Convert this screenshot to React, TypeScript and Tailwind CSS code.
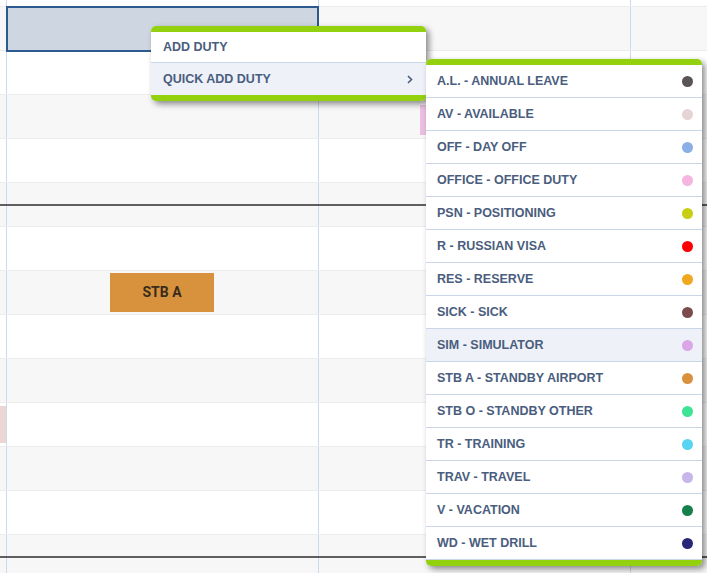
import React from "react";

const COLS = [6, 311, 311, 76];

function Cells({ h, bg }: { h: number; bg: string }) {
  return (
    <div className={`flex ${bg}`} style={{ height: h }}>
      {COLS.map((w, i) => (
        <div
          key={i}
          className={`shrink-0 ${i > 0 ? "border-l border-[#cbd9ea]" : ""}`}
          style={{ width: i > 0 ? w + 1 : w }}
        />
      ))}
    </div>
  );
}

function Row({ gray }: { gray: boolean }) {
  return (
    <div className="border-b border-[#ececec]">
      <Cells h={43} bg={gray ? "bg-[#f7f7f7]" : "bg-white"} />
    </div>
  );
}

function Separator() {
  return (
    <div className="flex flex-col border-b border-[#ececec]">
      <Cells h={21} bg="bg-[#f7f7f7]" />
      <div className="h-[2px] bg-[#5f5f5f]" />
      <Cells h={20} bg="bg-[#f7f7f7]" />
    </div>
  );
}

const DUTIES: [string, string][] = [
  ["A.L. - ANNUAL LEAVE", "#5a5456"],
  ["AV - AVAILABLE", "#e6d3d6"],
  ["OFF - DAY OFF", "#8ab0e6"],
  ["OFFICE - OFFICE DUTY", "#f4b6e0"],
  ["PSN - POSITIONING", "#c6cf14"],
  ["R - RUSSIAN VISA", "#ff0000"],
  ["RES - RESERVE", "#f0a820"],
  ["SICK - SICK", "#7b4c4b"],
  ["SIM - SIMULATOR", "#dba6e6"],
  ["STB A - STANDBY AIRPORT", "#d9913f"],
  ["STB O - STANDBY OTHER", "#3ee495"],
  ["TR - TRAINING", "#56d4f2"],
  ["TRAV - TRAVEL", "#c6b6ea"],
  ["V - VACATION", "#16804a"],
  ["WD - WET DRILL", "#2a2677"],
];

const font = { fontFamily: '"Liberation Sans", Arial, sans-serif' };

export default function App() {
  return (
    <div className="relative w-[707px] h-[573px] overflow-hidden bg-white">
      {/* background grid */}
      <div className="flex flex-col">
        <div className="border-b border-[#ececec]">
          <Cells h={6} bg="bg-white" />
        </div>
        <Row gray />
        <Row gray={false} />
        <Row gray />
        <Row gray={false} />
        <Separator />
        <Row gray={false} />
        <Row gray />
        <Row gray={false} />
        <Row gray />
        <Row gray={false} />
        <Row gray />
        <Row gray={false} />
        <Separator />
      </div>

      {/* selection */}
      <div className="absolute left-[6px] top-[6px] w-[313px] h-[46px] bg-[#cdd6e1] border-2 border-[#2d5a8e]" />

      {/* duty blocks */}
      <div
        className="absolute left-[110px] top-[273px] w-[104px] h-[39px] bg-[#d8923e] flex items-center justify-center text-[14px] font-bold text-[#3a2b1c]"
        style={{ fontFamily: "Roboto, sans-serif" }}
      >
        STB A
      </div>
      <div className="absolute left-[420px] top-[105px] w-[10px] h-[30px] bg-[#ecbfe2]" />
      <div className="absolute left-0 top-[406px] w-[6px] h-[37px] bg-[#ebd5d5]" />

      {/* context menu */}
      <div
        className="absolute left-[151px] top-[26px] w-[275px] rounded-[5px] overflow-hidden bg-white shadow-[3px_3px_6px_rgba(0,0,0,0.45)] flex flex-col text-[12.5px] font-bold text-[#4a5d7e]"
        style={font}
      >
        <div className="h-[6px] bg-[#93d10f]" />
        <div className="h-[31px] flex items-center px-[12px] border-b border-[#c9d7e8]">ADD DUTY</div>
        <div className="h-[32px] flex items-center justify-between pl-[12px] pr-[12px] bg-[#eef2f8]">
          <span>QUICK ADD DUTY</span>
          <svg width="6" height="9" viewBox="0 0 6 9" className="mr-[1px]">
            <polyline points="1,1 4.5,4.5 1,8" fill="none" stroke="#4a5d7e" strokeWidth="1.6" />
          </svg>
        </div>
        <div className="h-[6px] bg-[#93d10f]" />
      </div>

      {/* submenu */}
      <div
        className="absolute left-[426px] top-[59px] w-[276px] rounded-[5px] overflow-hidden bg-white shadow-[3px_3px_6px_rgba(0,0,0,0.45)] flex flex-col text-[12.5px] font-bold text-[#4a5d7e]"
        style={font}
      >
        <div className="h-[6px] bg-[#93d10f]" />
        {DUTIES.map(([label, color], i) => (
          <div
            key={label}
            className={`h-[33px] flex items-center justify-between pl-[11px] pr-[9px] border-b border-[#c9d7e8] ${
              label.startsWith("SIM") ? "bg-[#eef2f8]" : "bg-white"
            }`}
          >
            <span>{label}</span>
            <span className="w-[11px] h-[11px] rounded-full" style={{ backgroundColor: color }} />
          </div>
        ))}
        <div className="h-[6px] bg-[#93d10f]" />
      </div>
    </div>
  );
}
